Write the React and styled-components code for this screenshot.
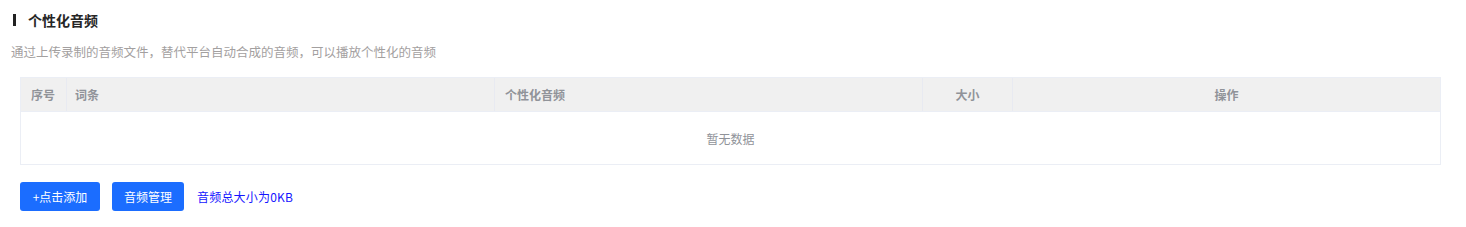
import React from "react";
import styled, { createGlobalStyle } from "styled-components";

const Global = createGlobalStyle`
  html, body { margin: 0; padding: 0; background: #fff; }
  body { font-family: "Noto Sans CJK SC", "Noto Sans", sans-serif; }
`;

const Page = styled.div`
  width: 1466px;
  height: 227px;
  box-sizing: border-box;
  padding-top: 10px;
`;

const Title = styled.div`
  display: flex;
  align-items: center;
  height: 20px;
  padding-left: 13px;
  font-size: 14px;
  font-weight: 700;
  color: #262626;
  &::before {
    content: "";
    display: block;
    width: 3px;
    height: 12px;
    background: #222;
    margin-right: 12px;
  }
`;

const Desc = styled.div`
  margin: 12px 0 0 11px;
  height: 20px;
  line-height: 20px;
  font-size: 12.5px;
  color: #a3a0a0;
`;

const Table = styled.div`
  margin: 15px 25px 0 20px;
  border: 1px solid #ebeef5;
`;

const Row = styled.div`
  display: grid;
  grid-template-columns: 45px 1fr 1fr 90px 1fr;
  background: #f0f0f0;
  height: 33px;
  border-bottom: 1px solid #ebeef5;
`;

const HeadCell = styled.div`
  display: flex;
  align-items: center;
  justify-content: ${(p) => (p.$center ? "center" : "flex-start")};
  padding: 0 ${(p) => (p.$center ? 0 : p.$pad || 10)}px;
  font-size: 12px;
  font-weight: 700;
  color: #909399;
  border-left: ${(p) => (p.$first ? "none" : "1px solid #e8eaf1")};
`;

const Empty = styled.div`
  height: 52px;
  display: flex;
  align-items: center;
  justify-content: center;
  font-size: 12px;
  color: #909399;
`;

const Actions = styled.div`
  display: flex;
  align-items: center;
  margin: 17px 0 0 20px;
`;

const Button = styled.button`
  height: 29px;
  padding: 0 12px;
  min-width: ${(p) => p.$w}px;
  margin-right: ${(p) => p.$gap || 12}px;
  border: none;
  border-radius: 3px;
  background: #1b6dff;
  color: #fff;
  font-family: inherit;
  font-size: 12px;
  cursor: pointer;
`;

const Total = styled.span`
  font-size: 12px;
  letter-spacing: 0.2px;
  color: #1515ff;
`;

export default function App() {
  return (
    <Page>
      <Global />
      <Title>个性化音频</Title>
      <Desc>通过上传录制的音频文件，替代平台自动合成的音频，可以播放个性化的音频</Desc>
      <Table>
        <Row>
          <HeadCell $first>序号</HeadCell>
          <HeadCell $pad={8}>词条</HeadCell>
          <HeadCell>个性化音频</HeadCell>
          <HeadCell $center>大小</HeadCell>
          <HeadCell $center>操作</HeadCell>
        </Row>
        <Empty>暂无数据</Empty>
      </Table>
      <Actions>
        <Button $w={80}>+点击添加</Button>
        <Button $w={72} $gap={13}>音频管理</Button>
        <Total>音频总大小为0KB</Total>
      </Actions>
    </Page>
  );
}
